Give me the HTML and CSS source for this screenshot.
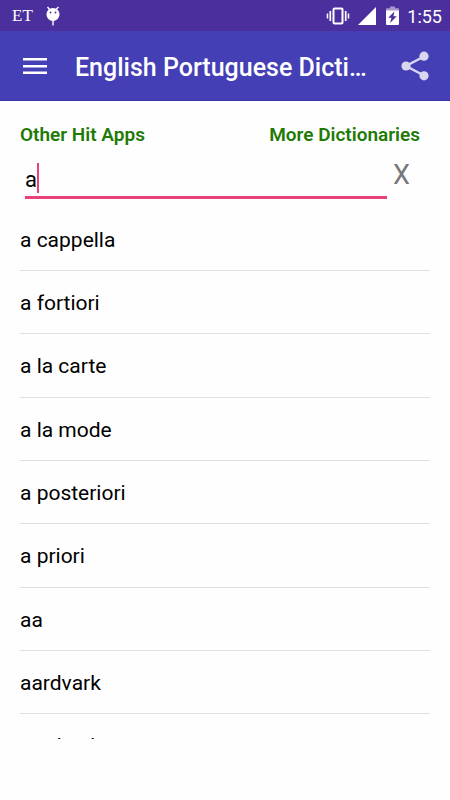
FILE: index.html
```html
<!DOCTYPE html>
<html lang="en">
<head>
<meta charset="utf-8">
<meta name="viewport" content="width=device-width, initial-scale=1">
<title>English Portuguese Dictionary</title>
<link rel="stylesheet" href="styles.css">
</head>
<body>
<div class="status">
  <span class="carrier">ET</span>
  <svg class="bug" width="14" height="20" viewBox="0 0 14 20" fill="#fff" aria-hidden="true">
    <path d="M1.500 1l2.500 3M12.500 1L10 3.500M7 13v6.500" stroke="#fff" stroke-width="1.400" fill="none"/>
    <path d="M7 2a6.500 6 0 0 1 6.500 6c0 3.800-3 7-6.500 7S.5 11.800.5 8A6.500 6 0 0 1 7 2z"/>
    <circle cx="4.500" cy="6.500" r=".9" fill="#4b2f9c"/><circle cx="9.500" cy="6.500" r=".9" fill="#4b2f9c"/>
  </svg>
  <div class="indicators">
    <svg width="24" height="20" viewBox="0 0 24 20" fill="none" stroke="#fff" aria-hidden="true">
      <rect x="7.500" y="2.500" width="9" height="15" rx="1" stroke-width="2"/>
      <path d="M4.300 5v10M19.700 5v10" stroke-width="1.700"/>
      <path d="M1.500 7.500v5M22.500 7.500v5" stroke-width="1.500"/>
    </svg>
    <svg width="18" height="20" viewBox="0 0 18 20" fill="#fff" aria-hidden="true"><path d="M18 1v18H0z"/></svg>
    <svg class="battery" width="13" height="20" viewBox="0 0 13 20" aria-hidden="true">
      <path d="M0 5V3.200Q0 2.200 1 2.200h3V.5h5v1.700h3q1 0 1 1V5z" fill="#a797cd"/>
      <path d="M0 4.500h13V18q0 1-1 1H1q-1 0-1-1z" fill="#fff"/>
      <path d="M8.500 5.500L2.200 11.800h3.300L4 17l6.800-6.700H7.400z" fill="#4b2f9c"/>
    </svg>
    <time class="clock">1:55</time>
  </div>
</div>
<header class="bar">
  <button class="icon-button" aria-label="Menu">
    <svg width="24" height="18" viewBox="0 0 24 18" fill="#fff"><path d="M0 1h24v2.500H0zM0 8h24v2.500H0zM0 14.500h24V17H0z"/></svg>
  </button>
  <h1 class="title">English Portuguese Dictionary</h1>
  <button class="icon-button" aria-label="Share">
    <svg width="28" height="30" viewBox="0 0 28 30" fill="#d9d6f0">
      <path d="M23 5.500L5 15l18 9.500" fill="none" stroke="#d9d6f0" stroke-width="2.500"/>
      <circle cx="23" cy="5.200" r="4.600"/><circle cx="5" cy="15" r="4.600"/><circle cx="23" cy="24.800" r="4.600"/>
    </svg>
  </button>
</header>
<main class="content">
  <nav class="links">
    <a href="#apps">Other Hit Apps</a>
    <a href="#dictionaries">More Dictionaries</a>
  </nav>
  <form class="search">
    <div class="field">
      <input class="query" type="text" value="a" size="1" aria-label="Search word"><span class="caret"></span>
    </div>
    <button class="clear" type="reset" aria-label="Clear">X</button>
  </form>
  <ul class="words">
    <li>a cappella</li>
    <li>a fortiori</li>
    <li>a la carte</li>
    <li>a la mode</li>
    <li>a posteriori</li>
    <li>a priori</li>
    <li>aa</li>
    <li>aardvark</li>
    <li>aardvarks</li>
  </ul>
</main>
</body>
</html>
```

FILE: styles.css
```css
* {
  box-sizing: border-box;
}

body {
  margin: 0;
  height: 100vh;
  display: flex;
  flex-direction: column;
  overflow: hidden;
  background: #fefefe;
  color: #000;
  font-family: Roboto, sans-serif;
}

button {
  border: 0;
  padding: 0;
  background: none;
  font-family: inherit;
}

svg {
  display: block;
}

.status {
  flex: none;
  display: flex;
  align-items: center;
  height: 31px;
  padding: 0 8px 0 12px;
  background: #4b2f9c;
  color: #fff;
}

.carrier {
  font: 17px "Liberation Serif", serif;
}

.bug {
  margin-left: 13px;
}

.indicators {
  display: flex;
  align-items: center;
  gap: 8px;
  margin-left: auto;
}

.battery {
  margin-left: 2px;
}

.clock {
  padding-top: 2px;
  font-size: 18px;
  font-weight: 400;
}

.bar {
  flex: none;
  display: flex;
  align-items: center;
  height: 70px;
  padding: 0 21px 0 23px;
  background: #453fb5;
  border-bottom: 1px solid #3a35a0;
}

.icon-button {
  flex: none;
}

.title {
  flex: 1;
  min-width: 0;
  margin: 0 32px 0 28px;
  padding-top: 4px;
  overflow: hidden;
  text-overflow: ellipsis;
  white-space: nowrap;
  color: #fff;
  font-size: 25px;
  font-weight: 500;
  line-height: 32px;
}

.content {
  flex: 1;
  min-height: 0;
  display: flex;
  flex-direction: column;
  padding: 22px 20px 61px;
}

.links {
  display: flex;
  justify-content: space-between;
  padding-right: 10px;
}

.links a {
  color: #1f7a06;
  font-size: 19px;
  font-weight: 600;
  line-height: 24px;
  text-decoration: none;
}

.search {
  display: flex;
  align-items: flex-start;
  padding: 12px 20px 0 5px;
}

.field {
  flex: 1;
  display: flex;
  align-items: center;
  height: 40px;
  border-bottom: 3px solid #ec407a;
}

.query {
  width: 12px;
  height: 34px;
  border: 0;
  padding: 4px 0 0;
  outline: 0;
  background: none;
  color: #000;
  font-family: inherit;
  font-size: 22px;
}

.caret {
  width: 2px;
  height: 30px;
  background: #ec407a;
}

.clear {
  width: 17px;
  margin-left: 6px;
  color: #777;
  font-size: 27px;
  line-height: 32px;
}

.words {
  flex: 1;
  min-height: 0;
  overflow: hidden;
  margin: 9px 0 0;
  padding: 0;
  list-style: none;
  font-size: 21px;
}

.words li {
  height: 63px;
  border-bottom: 1px solid #dfdfdf;
  line-height: 64px;
}

.words li:nth-child(3n) {
  height: 64px;
}
```
